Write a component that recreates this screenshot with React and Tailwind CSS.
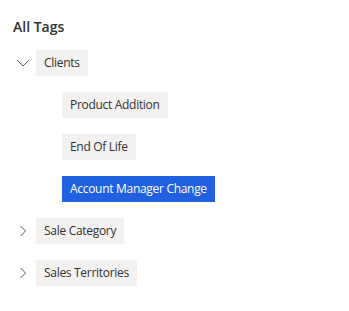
import React from 'react';

const font = { fontFamily: '"Segoe UI", "Open Sans", "Noto Sans", sans-serif' };

function ChevronDown() {
  return (
    <svg width="14" height="8" viewBox="0 0 14 8" className="text-[#605e5c]">
      <path d="M1 1l6 6 6-6" fill="none" stroke="currentColor" strokeWidth="1" />
    </svg>
  );
}

function ChevronRight() {
  return (
    <svg width="8" height="12" viewBox="0 0 8 12" className="text-[#605e5c]">
      <path d="M1.5 1l5 5-5 5" fill="none" stroke="currentColor" strokeWidth="1" />
    </svg>
  );
}

function Tag({ label, selected }) {
  return (
    <span
      className={`inline-flex items-center h-[26px] px-2 text-[12px] tracking-[-0.3px] ${
        selected ? 'bg-[#2160e0] text-white' : 'bg-[#f3f2f1] text-[#323130]'
      }`}
    >
      {label}
    </span>
  );
}

function GroupRow({ label, open }) {
  return (
    <div className="flex items-center h-[26px]">
      <div className="w-[36px] flex justify-center pl-[10px]">
        {open ? <ChevronDown /> : <ChevronRight />}
      </div>
      <Tag label={label} />
    </div>
  );
}

export default function App() {
  const children = ['Product Addition', 'End Of Life', 'Account Manager Change'];
  return (
    <div className="w-[349px] h-[311px] bg-white" style={font}>
      <div className="pl-[13px] pt-[16px] text-[14px] font-semibold text-[#323130]">All Tags</div>
      <div className="flex flex-col gap-[16px] pt-[13px]">
        <GroupRow label="Clients" open />
        {children.map((c) => (
          <div key={c} className="pl-[62px] flex">
            <Tag label={c} selected={c === 'Account Manager Change'} />
          </div>
        ))}
        <GroupRow label="Sale Category" />
        <GroupRow label="Sales Territories" />
      </div>
    </div>
  );
}
